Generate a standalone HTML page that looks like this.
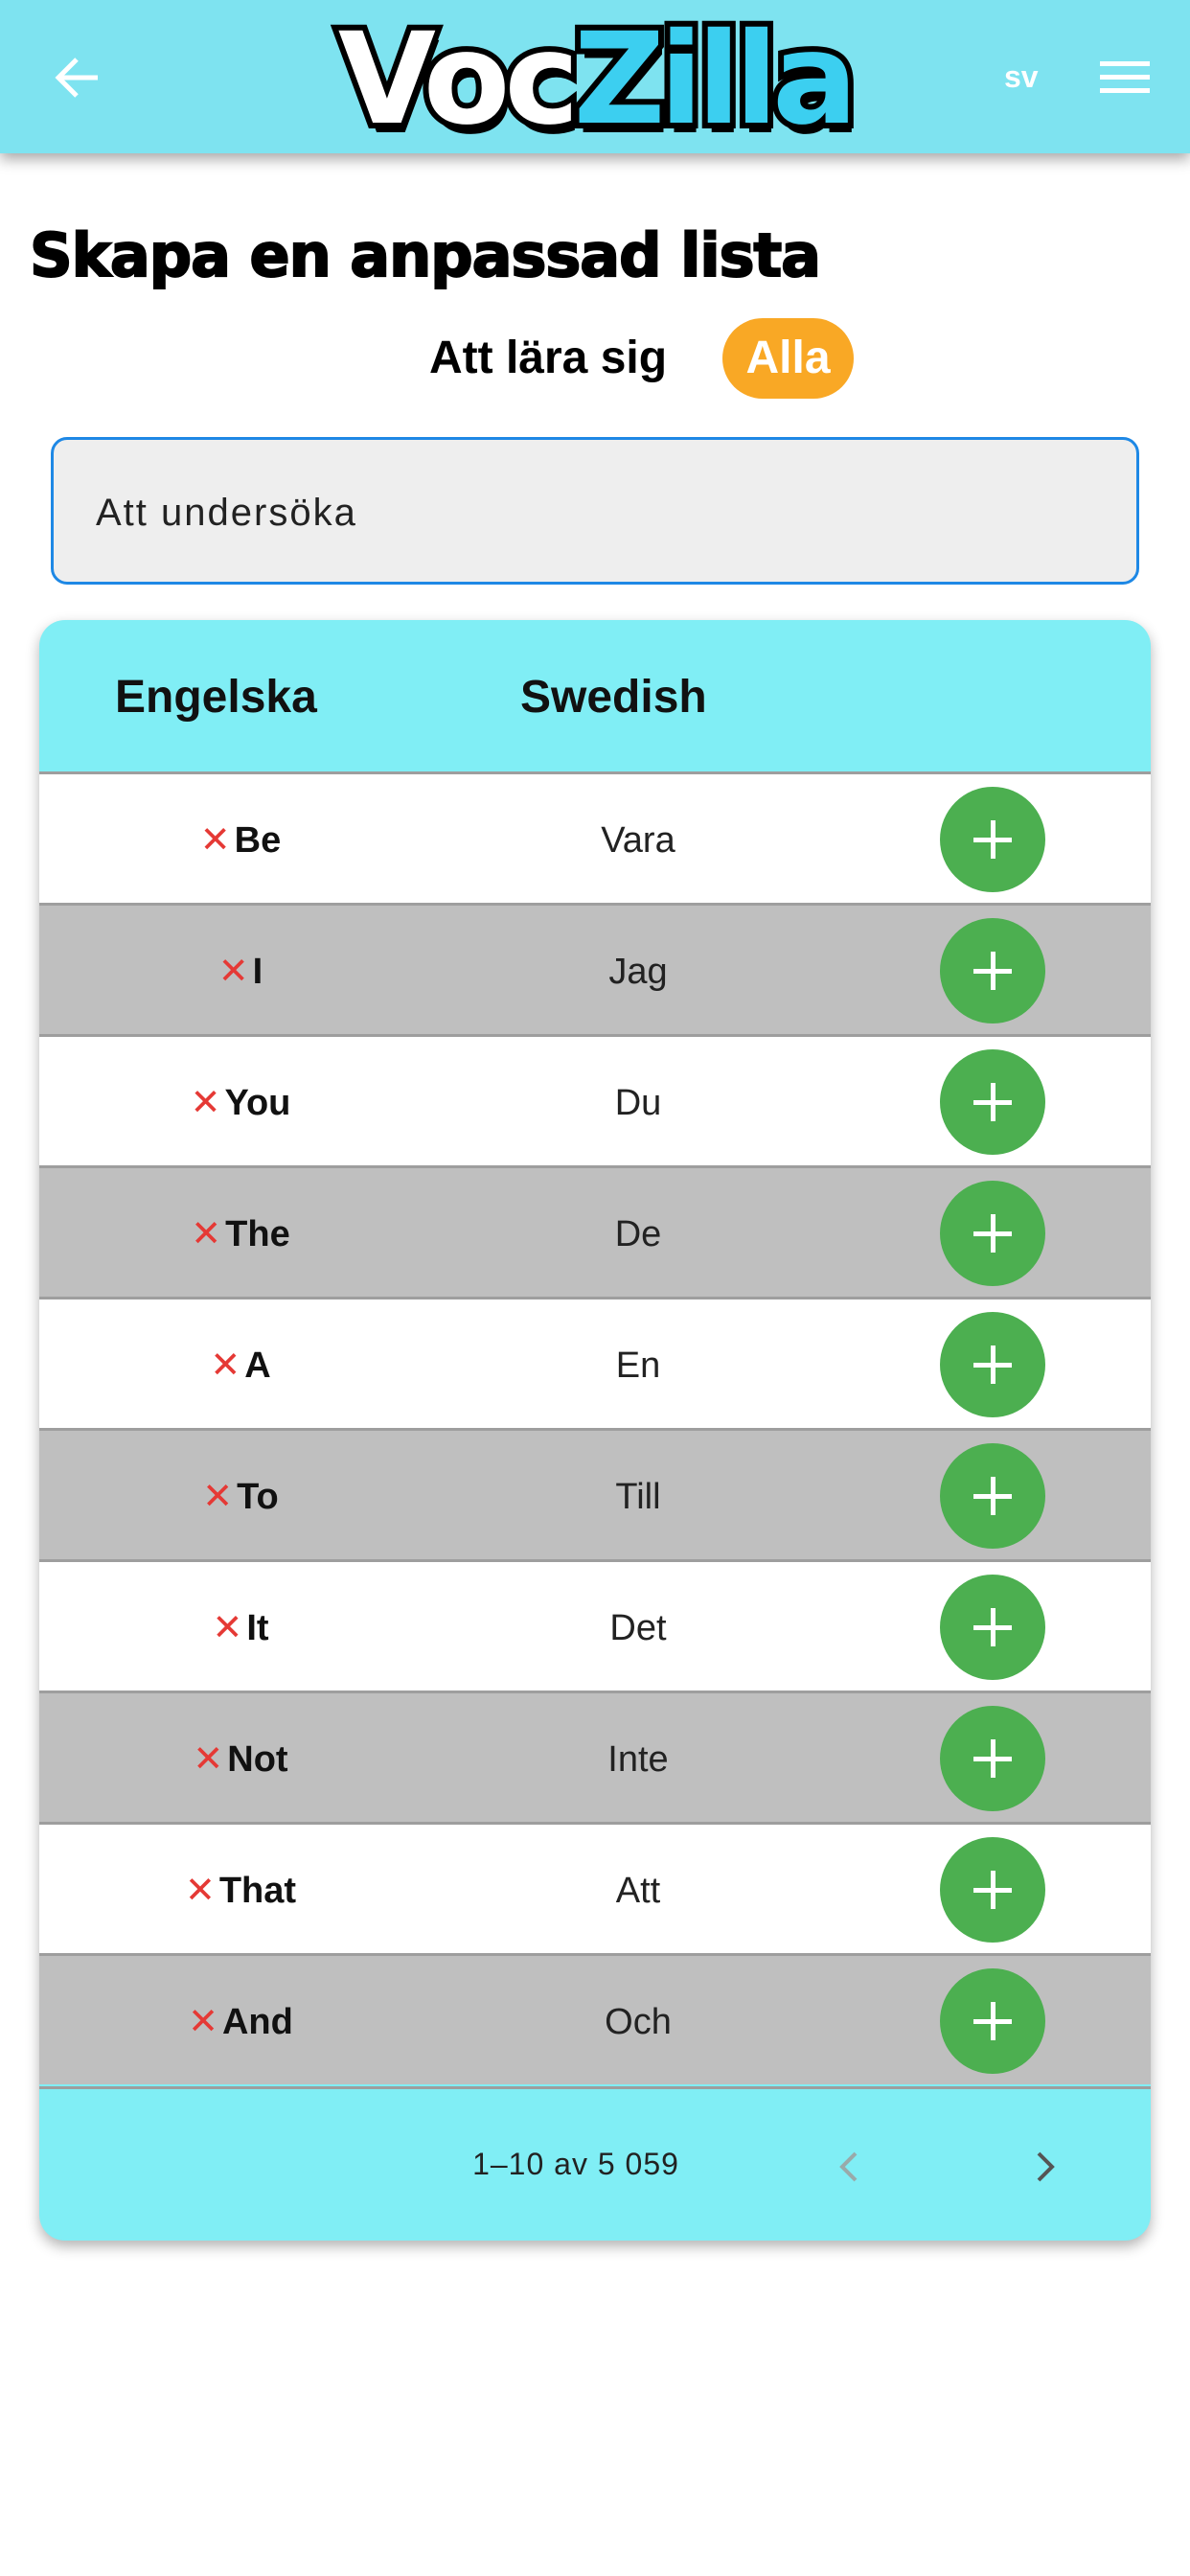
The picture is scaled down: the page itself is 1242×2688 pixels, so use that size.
<!DOCTYPE html>
<html><head><meta charset="utf-8"><style>
*{box-sizing:border-box;margin:0;padding:0}
body{width:1242px;height:2688px;background:#fff;font-family:"Liberation Sans",sans-serif;position:relative;overflow:hidden}
.hdr{position:absolute;left:0;top:0;width:1242px;height:160px;background:#7ee3f0;box-shadow:0 6px 14px rgba(0,0,0,.35)}
.logo{position:absolute;left:334px;top:12px;width:574px;height:142px;font-family:"DejaVu Sans","Liberation Sans",sans-serif;font-weight:900;font-size:132px;letter-spacing:-6px;line-height:142px;text-align:center}
.title{position:absolute;left:31px;top:230px;font-size:62px;font-weight:900;font-family:"DejaVu Sans",sans-serif;letter-spacing:-1px;-webkit-text-stroke:2px #000}
.sub{position:absolute;left:448px;top:346px;font-size:48px;font-weight:bold}
.pill{position:absolute;left:754px;top:332px;width:137px;height:84px;border-radius:42px;background:#f9a825;color:#fff;font-size:48px;font-weight:bold;text-align:center;line-height:84px}
.inp{position:absolute;left:53px;top:456px;width:1136px;height:154px;background:#eee;border:3px solid #1e88e5;border-radius:17px;font-size:40px;letter-spacing:2px;padding-left:44px;line-height:152px;color:#222}
.card{position:absolute;left:41px;top:647px;width:1160px;height:1691px;border-radius:27px;overflow:hidden;box-shadow:0 6px 14px rgba(0,0,0,.3);background:#80eef5}
.th{position:absolute;top:0;height:158px;line-height:162px;font-size:48px;font-weight:bold;color:#111}
.row{position:absolute;left:0;width:1160px;height:137px;border-top:3px solid #9e9e9e}
.en,.sw{position:absolute;top:0;line-height:138px;font-size:38px;text-align:center;width:400px}
.en{left:10px;font-weight:bold;color:#111}.en span{color:#e53935;font-weight:normal;margin-right:4px}
.sw{left:425px;color:#222}
.plus{position:absolute;left:940px;top:13px;width:110px;height:110px;border-radius:55px;background:#4caf50}
.plus:before{content:"";position:absolute;left:35px;top:53px;width:40px;height:5px;background:#fff}
.plus:after{content:"";position:absolute;left:53px;top:35px;width:5px;height:40px;background:#fff}
.ft{position:absolute;top:1530px;left:0;width:1160px;height:161px;border-top:3px solid #9e9e9e}
</style></head><body>
<div class="hdr">
<svg style="position:absolute;left:56px;top:58px" width="48" height="46" viewBox="0 0 48 46"><path d="M46 23H6M24 4L5 23l19 19" stroke="#fff" stroke-width="5" fill="none"/></svg>
<div class="logo"><span style="color:#fff;-webkit-text-stroke:12px #000;paint-order:stroke fill;text-shadow:4px 10px 0 #000">Voc</span><span style="color:#3ccff0;-webkit-text-stroke:12px #000;paint-order:stroke fill;text-shadow:4px 10px 0 #000">Zilla</span></div>
<div style="position:absolute;left:1048px;top:62px;color:#fff;font-size:32px;font-weight:bold">sv</div>
<div style="position:absolute;left:1148px;top:64px;width:52px;height:5px;background:#fff;box-shadow:0 14px 0 #fff,0 28px 0 #fff"></div>
</div>
<div class="title">Skapa en anpassad lista</div>
<div class="sub">Att lära sig</div>
<div class="pill">Alla</div>
<div class="inp">Att undersöka</div>
<div class="card">
<div class="th" style="left:79px">Engelska</div>
<div class="th" style="left:502px">Swedish</div>
<div class="row" style="top:158px;background:#fff"><div class="en"><span>✕</span>Be</div><div class="sw">Vara</div><div class="plus"></div></div>
<div class="row" style="top:295px;background:#bfbfbf"><div class="en"><span>✕</span>I</div><div class="sw">Jag</div><div class="plus"></div></div>
<div class="row" style="top:432px;background:#fff"><div class="en"><span>✕</span>You</div><div class="sw">Du</div><div class="plus"></div></div>
<div class="row" style="top:569px;background:#bfbfbf"><div class="en"><span>✕</span>The</div><div class="sw">De</div><div class="plus"></div></div>
<div class="row" style="top:706px;background:#fff"><div class="en"><span>✕</span>A</div><div class="sw">En</div><div class="plus"></div></div>
<div class="row" style="top:843px;background:#bfbfbf"><div class="en"><span>✕</span>To</div><div class="sw">Till</div><div class="plus"></div></div>
<div class="row" style="top:980px;background:#fff"><div class="en"><span>✕</span>It</div><div class="sw">Det</div><div class="plus"></div></div>
<div class="row" style="top:1117px;background:#bfbfbf"><div class="en"><span>✕</span>Not</div><div class="sw">Inte</div><div class="plus"></div></div>
<div class="row" style="top:1254px;background:#fff"><div class="en"><span>✕</span>That</div><div class="sw">Att</div><div class="plus"></div></div>
<div class="row" style="top:1391px;background:#bfbfbf"><div class="en"><span>✕</span>And</div><div class="sw">Och</div><div class="plus"></div></div>
<div class="ft">
<div style="position:absolute;left:410px;width:300px;text-align:center;top:0;line-height:156px;font-size:32px;color:#222;letter-spacing:1px">1–10 av 5 059</div>
<svg style="position:absolute;left:833px;top:64px" width="24" height="34" viewBox="0 0 24 34"><path d="M19 3L5 17l14 14" stroke="#9aa" stroke-width="4" fill="none"/></svg>
<svg style="position:absolute;left:1038px;top:64px" width="24" height="34" viewBox="0 0 24 34"><path d="M5 3l14 14L5 31" stroke="#555" stroke-width="4" fill="none"/></svg>
</div>
</div>
</body></html>
